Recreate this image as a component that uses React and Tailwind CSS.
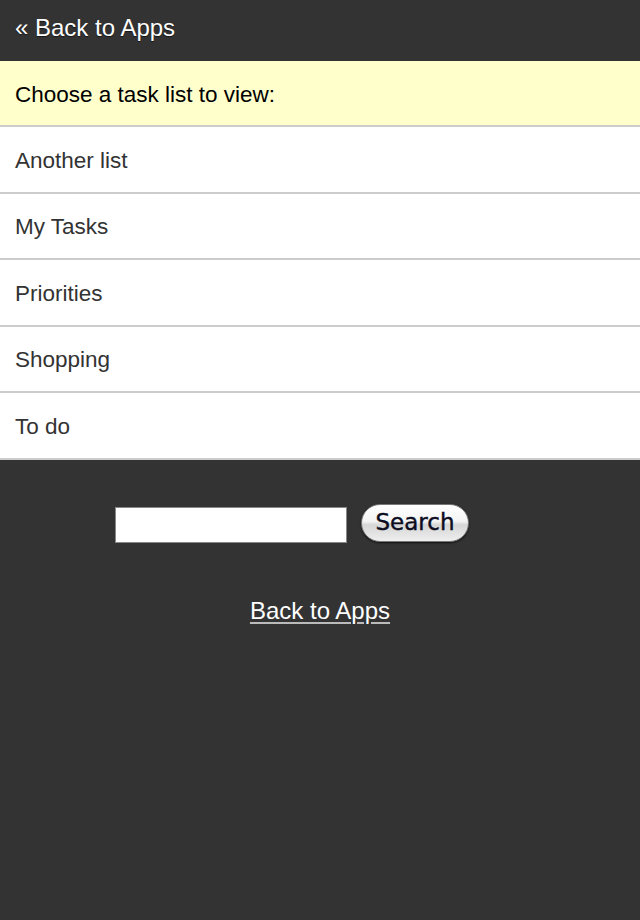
const lists = ['Another list', 'My Tasks', 'Priorities', 'Shopping', 'To do']

const App = () => {
  return (
    <div className="min-h-[920px] bg-[#333333] font-['Liberation_Sans',Arial,sans-serif]">
      {/* Top bar */}
      <div className="h-[61px] flex items-center px-[15px] pb-[5px]">
        <a className="text-[24px] text-white [text-shadow:0_1px_1px_rgba(0,0,0,0.6)]">
          « Back to Apps
        </a>
      </div>

      {/* Header */}
      <div className="h-[66px] bg-[#ffffcc] border-b-2 border-[#cccccc] flex items-center px-[15px] pt-[3px]">
        <span className="text-[22.5px] text-black">Choose a task list to view:</span>
      </div>

      {/* Task lists */}
      <ul className="bg-white">
        {lists.map((name) => (
          <li
            key={name}
            className="h-[66.5px] border-b-2 border-[#cccccc] flex items-center px-[15px] pt-[3px] text-[22.5px] text-[#333333]"
          >
            {name}
          </li>
        ))}
      </ul>

      {/* Footer */}
      <div className="flex flex-col pt-[44px]">
        <div className="flex items-center gap-[14px] pl-[115px]">
          <input
            type="text"
            className="w-[232px] h-[36px] bg-white border border-[#888888] outline-none mt-[3px]"
          />
          <button className="w-[108px] h-[38px] rounded-full bg-[linear-gradient(#ffffff,#f4f4f4_45%,#d6d6d6_55%,#eeeeee)] border border-[#777777] shadow-[0_1px_2px_rgba(0,0,0,0.7)] text-[23px] text-[#0c0c1e] font-['DejaVu_Sans',sans-serif] leading-none pb-[2px] [-webkit-text-stroke:0.4px_#0c0c1e]">
            Search
          </button>
        </div>
        <a className="self-center mt-[50px] text-[24px] text-white underline underline-offset-[3px] decoration-[#bbbbbb]">
          Back to Apps
        </a>
      </div>
    </div>
  )
}

export default App
